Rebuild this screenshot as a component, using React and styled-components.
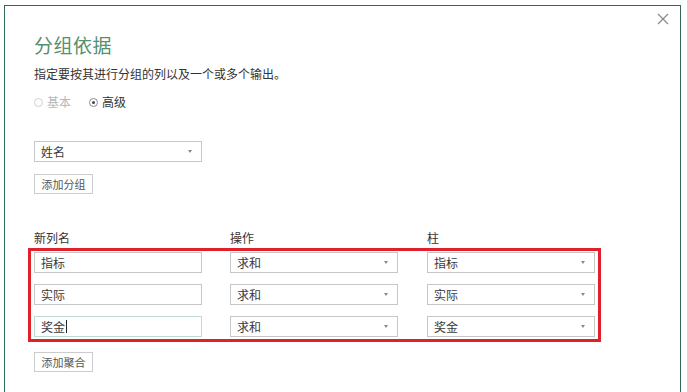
import React from 'react';
import styled, { createGlobalStyle } from 'styled-components';

const GlobalStyle = createGlobalStyle`
  html, body {
    margin: 0;
    padding: 0;
    background: #ffffff;
  }
  body {
    font-family: "Segoe UI", "Noto Sans CJK SC", "Noto Sans", sans-serif;
    color: #333333;
  }
`;

const rows = [
  { name: '指标', op: '求和', col: '指标' },
  { name: '实际', op: '求和', col: '实际' },
  { name: '奖金', op: '求和', col: '奖金', focused: true }
];

const App = () => {
  return (
    <>
      <GlobalStyle />
      <Dialog>
        <Close aria-label="close">
          <svg width="12" height="12" viewBox="0 0 12 12">
            <path d="M1 1 L11 11 M11 1 L1 11" stroke="#8a8a8a" strokeWidth="1.2" fill="none" />
          </svg>
        </Close>
        <Title>分组依据</Title>
        <Subtitle>指定要按其进行分组的列以及一个或多个输出。</Subtitle>
        <RadioRow>
          <RadioItem disabled>
            <RadioDot />
            基本
          </RadioItem>
          <RadioItem>
            <RadioDot checked />
            高级
          </RadioItem>
        </RadioRow>

        <GroupSection>
          <Select>
            <span>姓名</span>
            <Caret />
          </Select>
          <Button>添加分组</Button>
        </GroupSection>

        <Headers>
          <HeaderLabel>新列名</HeaderLabel>
          <HeaderLabel>操作</HeaderLabel>
          <HeaderLabel>柱</HeaderLabel>
        </Headers>

        <Highlight>
          {rows.map((row) => (
            <Row key={row.name}>
              <TextBox focused={row.focused}>
                {row.name}
                {row.focused && <CursorMark />}
              </TextBox>
              <Select>
                <span>{row.op}</span>
                <Caret />
              </Select>
              <Select>
                <span>{row.col}</span>
                <Caret />
              </Select>
            </Row>
          ))}
        </Highlight>

        <Button>添加聚合</Button>
      </Dialog>
    </>
  );
};

const Dialog = styled.div`
  position: relative;
  box-sizing: border-box;
  margin: 5px 0 0 4px;
  width: 677px;
  height: 400px;
  border: 1px solid #2f6a50;
  border-bottom: none;
  padding: 26px 0 0 29px;
`;

const Close = styled.div`
  position: absolute;
  top: 7px;
  right: 11px;
  width: 12px;
  height: 12px;
  display: flex;
`;

const Title = styled.div`
  font-size: 19px;
  line-height: 26px;
  color: #55906f;
  letter-spacing: 0.5px;
`;

const Subtitle = styled.div`
  margin-top: 8px;
  font-size: 12px;
  line-height: 16px;
  color: #333333;
`;

const RadioRow = styled.div`
  display: flex;
  gap: 18px;
  margin-top: 12px;
  font-size: 12px;
  line-height: 16px;
`;

const RadioItem = styled.div`
  display: flex;
  align-items: center;
  gap: 4px;
  color: ${(p) => (p.disabled ? '#b8b8b8' : '#333333')};
`;

const RadioDot = styled.span`
  box-sizing: border-box;
  width: 9px;
  height: 9px;
  border-radius: 50%;
  border: 1px solid ${(p) => (p.checked ? '#8a8a8a' : '#d0d0d0')};
  display: flex;
  align-items: center;
  justify-content: center;
  &::after {
    content: '';
    width: 3px;
    height: 3px;
    border-radius: 50%;
    background: ${(p) => (p.checked ? '#444444' : 'transparent')};
  }
`;

const GroupSection = styled.div`
  margin-top: 31px;
  display: flex;
  flex-direction: column;
  align-items: flex-start;
  gap: 12px;
`;

const Field = styled.div`
  box-sizing: border-box;
  width: 168px;
  height: 21px;
  border: 1px solid #c6c6c6;
  background: #ffffff;
  padding: 0 6px;
  display: flex;
  align-items: center;
  font-size: 12px;
  color: #3a3a3a;
`;

const Select = styled(Field)`
  justify-content: space-between;
  padding-right: 9px;
`;

const TextBox = styled(Field)`
  border-color: ${(p) => (p.focused ? '#bfdccd' : '#c6c6c6')};
`;

const CursorMark = styled.span`
  display: inline-block;
  width: 1px;
  height: 13px;
  margin-left: 1px;
  background: #222222;
`;

const Caret = styled.span`
  width: 0;
  height: 0;
  border-left: 2.5px solid transparent;
  border-right: 2.5px solid transparent;
  border-top: 3px solid #888888;
`;

const Button = styled.div`
  box-sizing: border-box;
  display: inline-flex;
  align-items: center;
  justify-content: center;
  width: 59px;
  height: 20px;
  border: 1px solid #cccccc;
  background: #ffffff;
  font-size: 11px;
  color: #555555;
`;

const Headers = styled.div`
  margin-top: 36px;
  display: grid;
  grid-template-columns: 196px 197px 168px;
  font-size: 12px;
  line-height: 16px;
`;

const HeaderLabel = styled.div`
  color: #333333;
`;

const Highlight = styled.div`
  box-sizing: border-box;
  width: 573px;
  margin: 2px 0 6px -6px;
  border: 3px solid #e0202a;
  padding: 1px 3px 2px 3px;
  display: flex;
  flex-direction: column;
  gap: 11px;
`;

const Row = styled.div`
  display: grid;
  grid-template-columns: 196px 197px 168px;
`;

export default App;
